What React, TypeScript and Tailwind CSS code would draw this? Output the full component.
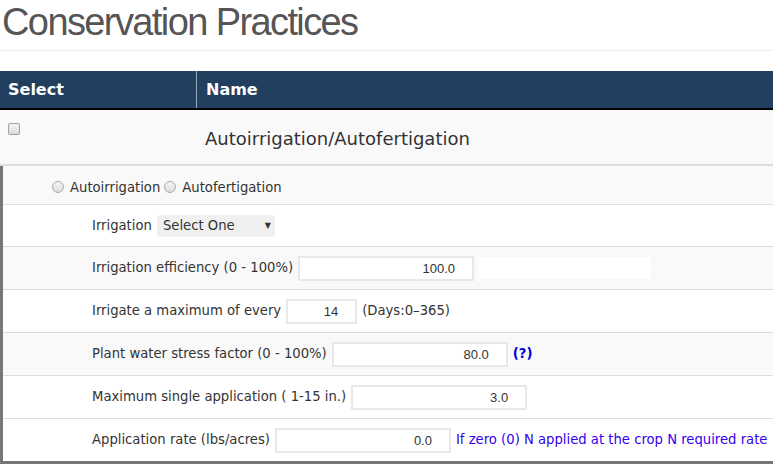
import { ChangeEvent, ReactNode, useState } from "react";

const labelFont = { fontFamily: '"DejaVu Sans", Verdana, sans-serif' };

function Row({ shaded, h = "h-[43px]", last, children }: { shaded?: boolean; h?: string; last?: boolean; children: ReactNode }) {
  return (
    <div
      className={`flex items-center whitespace-nowrap pl-[89px] text-[13.2px] ${h} ${last ? "" : "border-b border-[#dddddd]"} ${
        shaded ? "bg-[#f9f9f9]" : "bg-white"
      }`}
    >
      {children}
    </div>
  );
}

function NumInput({ value, width }: { value: string; width: string }) {
  const [v, setV] = useState(value);
  return (
    <input
      value={v}
      onChange={(e: ChangeEvent<HTMLInputElement>) => setV(e.target.value)}
      className={`${width} ml-[5px] h-[25px] shrink-0 border-2 border-[#e8e8e8] bg-white pr-[17px] text-right text-[13px] text-[#333] outline-none`}
      style={{ fontFamily: '"Liberation Sans", Arial, sans-serif' }}
    />
  );
}

function Radio({ on, onPick }: { on: boolean; onPick: () => void }) {
  return (
    <input
      type="radio"
      checked={on}
      onChange={onPick}
      className="mr-[6px] h-[12px] w-[12px] appearance-none rounded-full border border-[#a8a8a8] bg-[linear-gradient(#f4f4f4,#dcdcdc)] checked:bg-[radial-gradient(#333_30%,#e8e8e8_40%)]"
    />
  );
}

export default function App() {
  const [mode, setMode] = useState<string | null>(null);

  return (
    <div className="min-h-[464px] overflow-hidden bg-white text-[#333]" style={labelFont}>
      <h1
        className="border-b border-[#eeeeee] pb-[8px] pl-[2px] pt-[2px] text-[38px] leading-[40px] tracking-[-1.6px] text-[#555]"
        style={{ fontFamily: '"Liberation Sans", Arial, sans-serif' }}
      >
        Conservation Practices
      </h1>

      <div className="mt-[20px]">
        <div className="flex h-[39px] border-b-2 border-black bg-[#213f5e] text-[16px] font-bold text-white">
          <div className="flex w-[197px] items-center border-r border-[#9aa8b8] pl-[8px]">Select</div>
          <div className="flex items-center pl-[9px]">Name</div>
        </div>

        <div className="flex h-[56px] border-b-2 border-[#dddddd] bg-[#f9f9f9]">
          <div className="w-[197px] pl-[8px] pt-[13px]">
            <input
              type="checkbox"
              className="block h-[12px] w-[12px] appearance-none rounded-[2px] border border-[#a0a0a0] bg-[linear-gradient(#f4f4f4,#dcdcdc)]"
            />
          </div>
          <div className="pl-[8px] pt-[15px] text-[18px] text-[#333]">Autoirrigation/Autofertigation</div>
        </div>

        <div className="border-b-[3px] border-l-[3px] border-[#777777]">
          <div className="flex h-[39px] items-center border-b border-[#dddddd] bg-[#f9f9f9] pl-[49px] pt-[5px] text-[13.2px]">
            <label className="flex items-center">
              <Radio on={mode === "irr"} onPick={() => setMode("irr")} />
              Autoirrigation
            </label>
            <label className="ml-[4px] flex items-center">
              <Radio on={mode === "fert"} onPick={() => setMode("fert")} />
              Autofertigation
            </label>
          </div>

          <Row h="h-[42px]">
            <span>Irrigation</span>
            <div className="ml-[5px] flex h-[22px] w-[118px] items-center justify-between rounded-[3px] bg-[#f0f0f0] pl-[6px] pr-[4px]">
              <span>Select One</span>
              <span className="text-[8px]">▼</span>
            </div>
          </Row>

          <Row shaded>
            <span>Irrigation efficiency (0 - 100%)</span>
            <NumInput value="100.0" width="w-[176px]" />
            <div className="ml-[5px] h-[22px] w-[172px] rounded-[2px] bg-white" />
          </Row>

          <Row>
            <span>Irrigate a maximum of every</span>
            <NumInput value="14" width="w-[71px]" />
            <span className="ml-[5px]">(Days:0–365)</span>
          </Row>

          <Row shaded>
            <span>Plant water stress factor (0 - 100%)</span>
            <NumInput value="80.0" width="w-[176px]" />
            <span className="ml-[5px] font-bold text-[#0000dd]">(?)</span>
          </Row>

          <Row>
            <span>Maximum single application ( 1-15 in.)</span>
            <NumInput value="3.0" width="w-[176px]" />
          </Row>

          <Row h="h-[42px]" last>
            <span>Application rate (lbs/acres)</span>
            <NumInput value="0.0" width="w-[176px]" />
            <span className="ml-[5px] text-[#3300ee]">If zero (0) N applied at the crop N required rate</span>
          </Row>
        </div>
      </div>
    </div>
  );
}
